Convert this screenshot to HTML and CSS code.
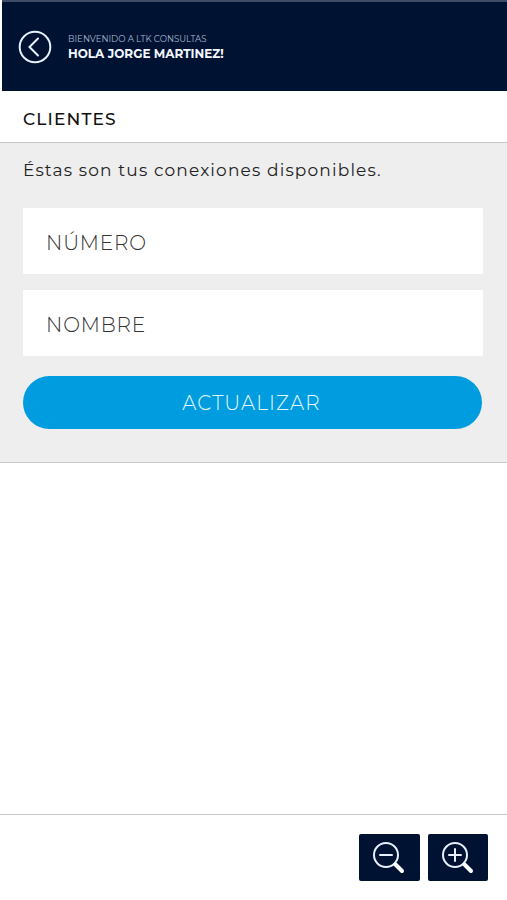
FILE: index.html
```html
<!DOCTYPE html>
<html lang="es">
<head>
    <meta charset="UTF-8">
    <meta name="viewport" content="width=device-width, initial-scale=1.0">
    <title>Clientes</title>
    <link rel="stylesheet" href="styles.css">
</head>
<body>
    <header class="header">
        <a href="#" class="back" aria-label="Volver">
            <svg width="34" height="34" viewBox="0 0 34 34">
                <circle cx="17" cy="17" r="15.3"/>
                <path d="M20 8.5L11.5 17L20 25.5"/>
            </svg>
        </a>
        <div class="greeting">
            <span class="welcome">BIENVENIDO A LTK CONSULTAS</span>
            <strong class="user">HOLA JORGE MARTINEZ!</strong>
        </div>
    </header>

    <h1 class="title">CLIENTES</h1>

    <form class="search">
        <p class="intro">Éstas son tus conexiones disponibles.</p>
        <input class="field numero" type="text" placeholder="NÚMERO">
        <input class="field nombre" type="text" placeholder="NOMBRE">
        <button class="button" type="button">ACTUALIZAR</button>
    </form>

    <main class="results"></main>

    <footer class="footer">
        <button class="zoom" type="button" aria-label="Alejar">
            <svg width="34" height="34" viewBox="0 0 34 34">
                <circle cx="14" cy="14" r="12"/>
                <path d="M8 14H20"/>
                <path class="handle" d="M23.5 23.5L30 30"/>
            </svg>
        </button>
        <button class="zoom" type="button" aria-label="Acercar">
            <svg width="34" height="34" viewBox="0 0 34 34">
                <circle cx="14" cy="14" r="12"/>
                <path d="M8 14H20M14 8V20"/>
                <path class="handle" d="M23.5 23.5L30 30"/>
            </svg>
        </button>
    </footer>
</body>
</html>
```
FILE: styles.css
```css
* {
    box-sizing: border-box;
}

body {
    margin: 0;
    height: 900px;
    display: flex;
    flex-direction: column;
    background-color: #fff;
    color: #222;
    font-family: Montserrat, Inter, sans-serif;
    overflow: hidden;
}

svg {
    display: block;
    fill: none;
    stroke: #e6f0ff;
    stroke-width: 2;
    stroke-linecap: round;
}

.header {
    flex: none;
    display: flex;
    align-items: center;
    height: 91px;
    margin-left: 2px;
    padding: 0 16px;
    border-top: 2px solid #3f4c68;
    background-color: #001231;
}

.greeting {
    display: flex;
    flex-direction: column;
    margin-left: 16px;
    padding-top: 2px;
}

.welcome {
    color: #a9b6cf;
    font-size: 8.65px;
    line-height: 13px;
}

.user {
    color: #f2f7ff;
    font-size: 12px;
    font-weight: 700;
    line-height: 16px;
}

.title {
    flex: none;
    height: 51px;
    margin: 0;
    padding: 3px 23px 0;
    font-size: 17px;
    font-weight: 500;
    line-height: 51px;
    letter-spacing: 1.15px;
    color: #111;
}

.search {
    flex: none;
    display: flex;
    flex-direction: column;
    height: 321px;
    padding: 16px 24px 0 23px;
    border-top: 1px solid #c9c9c9;
    border-bottom: 1px solid #c9c9c9;
    background-color: #eee;
}

.intro {
    margin: 0 0 26px;
    font-size: 17px;
    line-height: 23px;
    letter-spacing: 1.15px;
    white-space: nowrap;
}

.field {
    width: 100%;
    height: 66px;
    margin-bottom: 16px;
    padding: 3px 23px 0;
    border: 0;
    border-radius: 1px;
    background-color: #fff;
    font: 300 20px Montserrat, Inter, sans-serif;
    letter-spacing: 0.85px;
}

.field::placeholder {
    color: #333;
    opacity: 1;
}

.nombre {
    margin-bottom: 20px;
}

.button {
    height: 53px;
    margin-right: 1px;
    padding: 0 2px 0 0;
    border: 0;
    border-radius: 27px;
    background-color: #009ce0;
    color: #e4f8ff;
    font: 300 20px Montserrat, Inter, sans-serif;
    letter-spacing: 1.1px;
}

.results {
    flex: 1;
}

.footer {
    flex: none;
    display: flex;
    justify-content: flex-end;
    gap: 8px;
    height: 86px;
    padding: 19px 19px 0;
    border-top: 1px solid #c9c9c9;
}

.zoom {
    display: flex;
    align-items: center;
    justify-content: center;
    width: 60.5px;
    height: 47px;
    padding: 0;
    border: 0;
    border-radius: 2px;
    background-color: #001231;
}

.handle {
    stroke: #fff;
    stroke-width: 4;
}
```
